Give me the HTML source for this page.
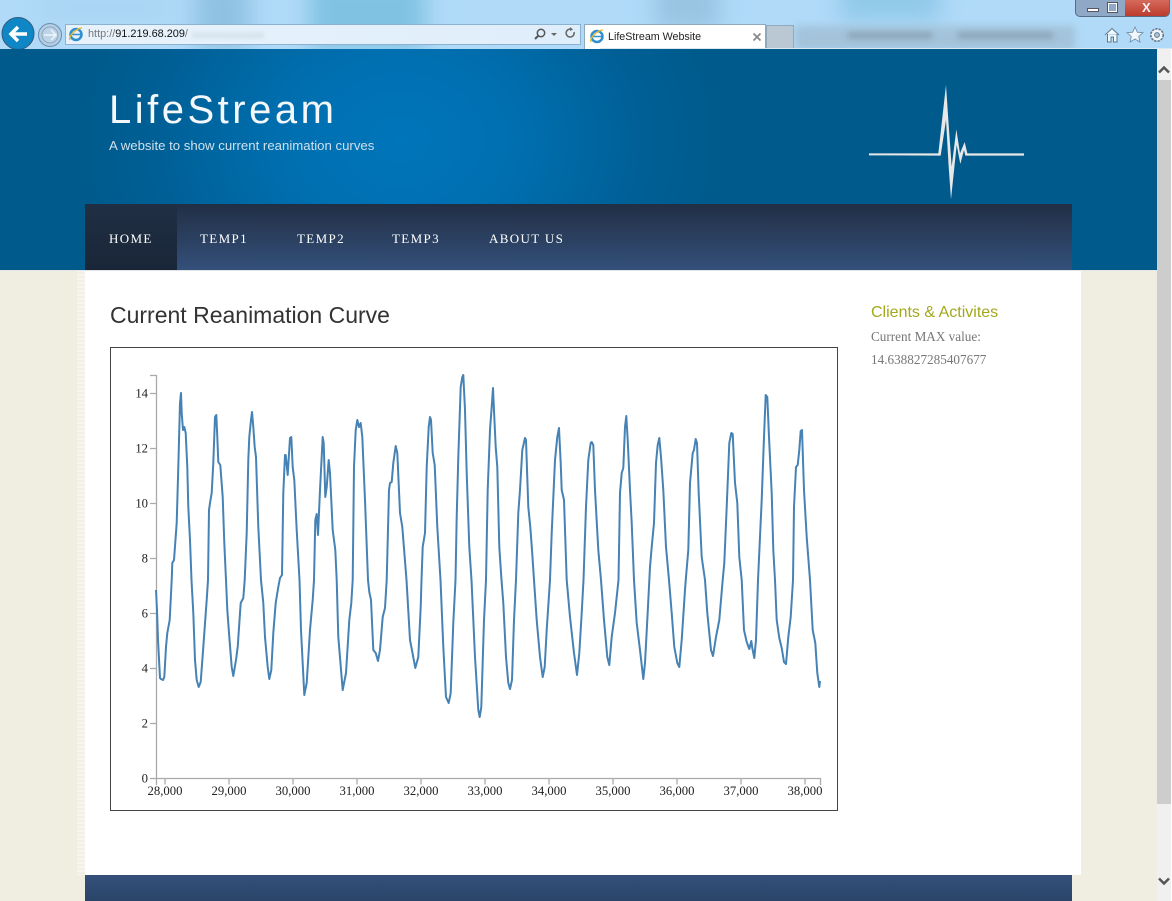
<!DOCTYPE html>
<html><head><meta charset="utf-8"><title>LifeStream Website</title>
<style>
html,body{margin:0;padding:0;width:1172px;height:901px;overflow:hidden;background:#f0eee1;font-family:"Liberation Sans",sans-serif}
#all{position:absolute;left:0;top:0;width:1172px;height:901px;overflow:hidden;filter:blur(.3px)}
.a{position:absolute}
#chrome{left:0;top:0;width:1172px;height:49px;overflow:hidden;background:#b0daf8}
#chrome .b{position:absolute;filter:blur(11px)}
#hdr{left:0;top:49px;width:1157px;height:221px;background:radial-gradient(ellipse 330px 260px at 400px 90px,#0075ba 0%,#006fb0 35%,#005f95 75%,#005a8b 100%)}
#nav{left:85px;top:204px;width:987px;height:66px;background:linear-gradient(#212f45,#34507a)}
#home{left:85px;top:204px;width:92px;height:66px;background:linear-gradient(#202f44,#1a2638)}
.n{position:absolute;top:231px;font:13px/15px "Liberation Serif",serif;letter-spacing:1.35px;color:#fff}
#stripe{left:77px;top:270px;width:8px;height:605px;background:repeating-linear-gradient(#f6f5ee 0 2px,#f2f0e6 2px 4px)}
#main{left:85px;top:270px;width:996px;height:605px;background:#fff}
#foot{left:85px;top:875px;width:987px;height:26px;background:linear-gradient(#34507a,#2a4468)}
#sb{left:1157px;top:49px;width:14px;height:852px;background:#f0f0f0}
#th{left:1157px;top:80px;width:14px;height:724px;background:#cdcdcd}
#edge{left:1171px;top:49px;width:1px;height:852px;background:#fff}
#url{left:65px;top:24px;width:516px;height:21px;background:linear-gradient(90deg,#e8f2fb,#dfeefb);border:1px solid #8db2cf;box-sizing:border-box}
#tab{left:584px;top:24px;width:182px;height:25px;background:#fff;border:1px solid #8fa9bd;border-bottom:0;box-sizing:border-box}
</style></head><body><div id="all">
<div class="a" id="chrome">
<div class="b" style="left:195px;top:-20px;width:55px;height:70px;background:#8fc2e2"></div>
<div class="b" style="left:310px;top:-20px;width:115px;height:70px;background:#80c2e2"></div>
<div class="b" style="left:655px;top:-20px;width:65px;height:50px;background:#98c4e2"></div>
<div class="b" style="left:840px;top:-20px;width:100px;height:40px;background:#90c8e8"></div>
<div class="b" style="left:40px;top:4px;width:130px;height:8px;background:#a0cbe8"></div>
<div class="b" style="left:795px;top:26px;width:280px;height:24px;background:#a3c3da;filter:blur(4px)"></div>
<div class="b" style="left:848px;top:32px;width:84px;height:7px;background:#8da6ba;filter:blur(3px)"></div>
<div class="b" style="left:958px;top:32px;width:95px;height:7px;background:#8da6ba;filter:blur(3px)"></div>
</div>
<div class="a" style="left:1075px;top:0;width:95px;height:17px;border-radius:0 0 5px 5px;background:#8fa8c6;border:1px solid #566b85;border-top:0;box-sizing:border-box;overflow:hidden"><div class="a" style="left:49px;top:0;width:46px;height:17px;background:linear-gradient(#d66a5c,#b9392a)"></div><div class="a" style="left:11px;top:8px;width:10px;height:2px;background:#fff;border:1px solid #556"></div><div class="a" style="left:32px;top:3px;width:7px;height:7px;border:1px solid #fff;outline:1px solid #556"></div><div class="a" style="left:66px;top:-1px;color:#f4f4f4;font:bold 13px/17px 'Liberation Sans',sans-serif">X</div></div>
<svg class="a" style="left:0;top:17px" width="66" height="32" viewBox="0 0 66 32"><circle cx="18" cy="16.500" r="16" fill="#0f86c5" stroke="#365a77"/><path d="M27 17H12M18 10l-7 7 7 7" stroke="#fff" stroke-width="3.500" fill="none"/><circle cx="50" cy="18" r="11.500" fill="#b2cde4" stroke="#6d8eaa"/><circle cx="50" cy="18" r="8" fill="#bcd4e8" stroke="#8fa9c0"/><path d="M56 18H44M51 13l5 5-5 5" stroke="#eef5fa" stroke-width="1.500" fill="none"/></svg>
<div class="a" id="url"></div>
<svg class="a" style="left:68px;top:26px" width="16" height="16" viewBox="0 0 16 16"><circle cx="8" cy="8.500" r="5.500" fill="none" stroke="#2f8fd0" stroke-width="2.500"/><path d="M3 8.500H13" stroke="#2f8fd0" stroke-width="1.500"/><path d="M2 14C0 10 9 2 14 2" stroke="#f0b92c" stroke-width="1.300" fill="none"/></svg>
<div class="a" style="left:88px;top:27px;font:10.900px/15px 'Liberation Sans',sans-serif;color:#777;white-space:nowrap">http://<span style="color:#111">91.219.68.209</span>/</div>
<div class="a" style="left:192px;top:33px;width:72px;height:5px;background:#d4e0ea;filter:blur(2px)"></div>
<svg class="a" style="left:533px;top:26px" width="46" height="16" viewBox="0 0 46 16"><circle cx="8" cy="7" r="3.700" fill="none" stroke="#555" stroke-width="1.500"/><path d="M5.500 9.500L2 13" stroke="#555" stroke-width="2"/><path d="M18 7h6l-3 3z" fill="#666"/><path d="M41 6a4 4 0 1 1-2-2.500" fill="none" stroke="#666" stroke-width="1.500"/><path d="M37 1l3 2.500-3 1.500z" fill="#666"/></svg>
<div class="a" id="tab"></div>
<div class="a" style="left:766px;top:25px;width:28px;height:24px;background:#b9c8d2;border:1px solid #8fa9bd;border-bottom:0;box-sizing:border-box"></div>
<svg class="a" style="left:589px;top:28px" width="16" height="16" viewBox="0 0 16 16"><circle cx="8" cy="8.500" r="5.500" fill="none" stroke="#2f8fd0" stroke-width="2.500"/><path d="M3 8.500H13" stroke="#2f8fd0" stroke-width="1.500"/><path d="M2 14C0 10 9 2 14 2" stroke="#f0b92c" stroke-width="1.300" fill="none"/></svg>
<div class="a" style="left:608px;top:30px;font:10.700px/15px 'Liberation Sans',sans-serif;color:#222;white-space:nowrap">LifeStream Website</div>
<svg class="a" style="left:752px;top:32px" width="10" height="10" viewBox="0 0 10 10"><path d="M1.500 1.500L8.500 8.500M8.500 1.500L1.500 8.500" stroke="#888" stroke-width="1.700"/></svg>
<svg class="a" style="left:1103px;top:26px" width="64" height="18" viewBox="0 0 64 18"><path d="M2 9L9 2.500 16 9M4.500 8v8h3.500v-5h2.500v5H14V8" fill="#f2f7fb" stroke="#5b7890" stroke-width="1"/><path d="M32 1l2.300 5.200 5.700.5-4.300 3.800 1.300 5.500-5-3-5 3 1.300-5.500L24 6.700l5.700-.5z" fill="#f2f7fb" stroke="#6b8aa3" stroke-width=".8"/><circle cx="54" cy="9" r="6.200" fill="#eef4f9" stroke="#66798a" stroke-width="1.600" stroke-dasharray="2.400 1"/><circle cx="54" cy="9" r="2.400" fill="#a9c6dd" stroke="#66798a" stroke-width="1"/></svg>
<div class="a" style="left:600px;top:48px;width:572px;height:1px;background:#dbe7f0"></div>

<div class="a" id="hdr"></div>
<div class="a" id="stripe"></div>
<div class="a" id="main"></div>
<div class="a" id="nav"></div>
<div class="a" id="home"></div>
<div class="a" id="foot"></div>
<div class="a" style="left:0;top:270px;width:1157px;height:1px;background:#e4e6e6"></div>
<div class="a" id="sb"></div><div class="a" id="th"></div><div class="a" id="edge"></div>
<svg class="a" style="left:1157px;top:63px" width="14" height="14" viewBox="0 0 14 14"><path d="M2 9.500L7 4.500 12 9.500" stroke="#555" stroke-width="2.500" fill="none"/></svg>
<svg class="a" style="left:1157px;top:874px" width="14" height="14" viewBox="0 0 14 14"><path d="M2 4.500L7 9.500 12 4.500" stroke="#555" stroke-width="2.500" fill="none"/></svg>

<div class="a" style="left:109px;top:86px;font:40px/48px 'Liberation Sans',sans-serif;letter-spacing:3.500px;color:#f4f8fb;white-space:nowrap">LifeStream</div>
<div class="a" style="left:109px;top:138px;font:13.200px/16px 'Liberation Sans',sans-serif;color:#cfe0ec;white-space:nowrap">A website to show current reanimation curves</div>
<svg class="a" style="left:850px;top:70px" width="200" height="140" viewBox="0 0 600 420"><polygon fill="#e8e8e8" points="57,250 265,250 288,45 296,165 305,290 319,178 330,250 344,216 352,250 522,250 522,257 346,257 342,240 331,282 320,225 303,388 296,290 288,150 272,257 57,256"/></svg>

<div class="n" style="left:109px">HOME</div>
<div class="n" style="left:200px">TEMP1</div>
<div class="n" style="left:297px">TEMP2</div>
<div class="n" style="left:392px">TEMP3</div>
<div class="n" style="left:489px">ABOUT US</div>

<div class="a" style="left:110px;top:301px;font:23px/28px 'Liberation Sans',sans-serif;color:#333;white-space:nowrap">Current Reanimation Curve</div>
<div class="a" style="left:871px;top:303px;font:16px/19px 'Liberation Sans',sans-serif;color:#a3a81c;white-space:nowrap">Clients &amp; Activites</div>
<div class="a" style="left:871px;top:325px;font:13.200px/23px 'Liberation Serif',serif;color:#777;white-space:nowrap">Current MAX value:<br>14.638827285407677</div>

<svg class="a" style="left:110px;top:347px" width="728" height="464" viewBox="110 347 728 464">
<rect x="110.500" y="347.500" width="727" height="463" fill="#fff" stroke="#444"/>
<g fill="none" stroke="#aaa" stroke-width="1.300">
<path d="M150 375.500H156.500V778.500H150"/>
<path d="M156.500 778.500H820.500V785"/>
<path d="M156.500 778.500V785M150 723.500h6M150 668.500h6M150 613.500h6M150 558.500h6M150 503.500h6M150 448.500h6M150 393.500h6"/>
<path d="M165 778.500v6M229 778.500v6M293 778.500v6M357 778.500v6M421 778.500v6M485 778.500v6M549 778.500v6M613 778.500v6M677 778.500v6M741 778.500v6M805 778.500v6"/>
</g>
<g font-family="'Liberation Serif',serif" font-size="12.700" fill="#222" text-anchor="end">
<text x="148" y="782.500">0</text><text x="148" y="727.500">2</text><text x="148" y="672.500">4</text><text x="148" y="617.500">6</text><text x="148" y="562.500">8</text><text x="148" y="507.500">10</text><text x="148" y="452.500">12</text><text x="148" y="397.500">14</text>
</g>
<g font-family="'Liberation Serif',serif" font-size="12.700" fill="#222" text-anchor="middle">
<text x="165" y="795">28,000</text><text x="229" y="795">29,000</text><text x="293" y="795">30,000</text><text x="357" y="795">31,000</text><text x="421" y="795">32,000</text><text x="485" y="795">33,000</text><text x="549" y="795">34,000</text><text x="613" y="795">35,000</text><text x="677" y="795">36,000</text><text x="741" y="795">37,000</text><text x="805" y="795">38,000</text>
</g>
<path fill="none" stroke="#4682b4" stroke-width="2" stroke-linejoin="round" d="M156 590 157 610 158 640 160 678 161 679 163 680 164.300 677 166 647 167.300 633 169.700 620 171.700 580 172.300 563 174 560 176.700 523 178.300 467 180 403 181 393 181.700 413 183 430 184.300 427 185.700 433 187.300 467 188.300 507 190 540 191.500 580 193.300 613 195 660 196.700 680 198.700 687 200.700 682 203.300 647 206.700 600 208 580 209 510 210 503 211.700 493 213.300 463 215 417 216.300 415 217.300 437 218.300 462 220.300 465 222.700 497 224.300 543 226 580 227.300 610 229.300 637 231.700 667 233.300 676 236 660 237.700 647 240.700 603 243.300 598 244.700 580 246.700 533 248.300 460 249.300 437 251 420 252 412 253.300 427 254.700 447 256 457 258.300 527 261 580 263.300 603 265 637 267.700 667 269.300 679 271.300 670 273.300 633 275.700 603 278.300 587 280 578 282 575 283.300 493 285 455 285.700 455 287.700 475 290 438 291.300 437 292.700 467 294.300 480 296.700 530 299.500 580 301 630 304.300 695 306.700 683 310 630 312.700 600 314 580 315.300 520 316.700 514 318 535 320 490 322.700 437 323.700 443 325.300 497 326.700 487 328.700 460 330 473 332.700 530 335.300 550 336.700 580 338.300 637 342.700 690 346 673 349.300 620 351.300 603 352.700 580 354 467 355.700 430 357.300 420 359 427 360.700 423 362.300 437 365 500 368 580 369.300 592 371 600 373.300 650 375.700 653 378 661 380 650 382.700 617 385 608 386.700 580 389 490 390 483 391.700 482 393.300 463 395.700 446 397.300 453 400 513 402.300 527 406.500 580 410 640 412.300 652 415.300 668 418.300 657 420.700 607 421.500 580 422.700 547 425 533 426.700 467 428.700 427 430 417 431 420 432.700 453 434.700 465 437.300 527 440.500 580 443.300 647 446 697 448.700 703 450.700 693 453.300 623 455.500 580 456.700 517 458.300 457 460.700 387 462.300 377 463.300 375 465 410 466.700 473 469.300 547 471.500 580 475 657 478.300 710 479.700 717 481.300 707 484 620 486 580 487.700 490 490 430 491.700 407 493 388 494.300 417 495.700 447 497.300 467 499.300 547 501.500 580 503.300 603 506 657 508.300 683 510 689 512 680 514 620 516 580 518.300 513 520 490 522.300 450 525 438 526 440 528.300 507 530.300 527 532 550 534 580 536.700 620 540 657 542.700 677 544.700 667 546.700 630 550 580 551.700 533 555 460 557.300 437 559 428 560.700 463 561.700 490 564 500 566.700 580 570 617 574 653 577 675 579.300 653 581.700 613 583.500 580 586 507 588.300 460 590.700 443 591.700 442 593.300 445 595 490 598.300 550 601 580 604 620 607.300 657 609.300 665 611.700 637 615 613 618.500 580 620 493 621.700 473 623.300 468 625 427 626.300 416 627.700 440 630 490 631.700 523 634 580 636.700 623 640 650 643.300 679 645 663 647.300 620 650 567 651.700 547 654 523 656 463 657.700 445 659.300 438 661 457 663.300 490 666 547 669 580 671.700 613 674.300 647 677.300 663 679.300 667 681.700 640 685 590 686 577 688.300 550 690 483 692.700 453 694 450 695.700 439 697 443 698.700 493 701.700 557 705 580 707.300 613 711 650 713 656 716 637 719.300 620 722.700 580 724.300 563 726.700 507 729.300 443 731.300 433 732.700 434 735 483 737.300 503 739.300 557 741.700 580 744 630 746.700 642 749.300 649 751.300 641 752.300 648 754.300 658 756 640 758 580 761.700 500 764 437 765.700 395 767.300 397 769 437 771.700 493 773.300 550 775 580 776.700 620 779.300 638 781.700 648 784 662 786 664 788.300 637 790.700 617 793 580 794 507 796 467 797.700 465 799.300 450 800.700 431 802 430 804 490 806.700 537 810 580 812.700 630 815.300 643 817.300 673 819.300 687 820 681"/>
</svg>
</div></body></html>
